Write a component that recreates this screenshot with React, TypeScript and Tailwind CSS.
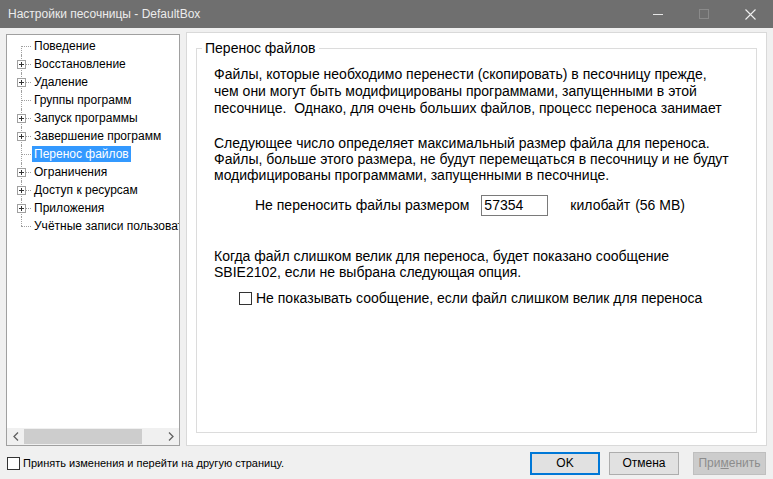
import React from "react";

const ITEMS = [
  { l: "Поведение", plus: false },
  { l: "Восстановление", plus: true },
  { l: "Удаление", plus: true },
  { l: "Группы программ", plus: false },
  { l: "Запуск программы", plus: true },
  { l: "Завершение программ", plus: true },
  { l: "Перенос файлов", plus: false, sel: true },
  { l: "Ограничения", plus: true },
  { l: "Доступ к ресурсам", plus: true },
  { l: "Приложения", plus: true },
  { l: "Учётные записи пользователей", plus: false },
];

function TreeRow({ i, l, plus, sel }: { i: number; l: string; plus: boolean; sel?: boolean }) {
  const first = i === 0;
  const last = i === ITEMS.length - 1;
  return (
    <div className="flex items-center h-[18px] whitespace-nowrap">
      <div className="relative w-[16px] h-[18px] shrink-0">
        {/* vertical connector */}
        <div
          className={`absolute left-[6px] border-l border-dotted border-[#a0a0a0] ${
            first ? "top-[9px] bottom-0" : last ? "top-0 h-[9px]" : "top-0 bottom-0"
          }`}
        />
        <div className="absolute left-[6px] top-[9px] w-[10px] border-t border-dotted border-[#a0a0a0]" />
        {plus && (
          <div className="absolute left-[2px] top-[5px] w-[9px] h-[9px] bg-white border border-[#a0a0a0] flex items-center justify-center">
            <svg width="5" height="5" viewBox="0 0 5 5">
              <path d="M0 2.5H5M2.5 0V5" stroke="#333" strokeWidth="1" />
            </svg>
          </div>
        )}
      </div>
      <span className={`ml-[1px] px-[2px] leading-[16px] ${sel ? "bg-[#3399ff] text-white" : "text-black"}`}>{l}</span>
    </div>
  );
}

export default function App() {
  return (
    <div
      className="w-[773px] h-[479px] bg-[#f0f0f0] flex flex-col overflow-hidden text-[12px] text-black"
      style={{ fontFamily: '"Liberation Sans", Arial, sans-serif' }}
    >
      {/* Title bar */}
      <div className="h-[28px] bg-[#6f6f6f] flex items-center shrink-0">
        <span className="ml-[8px] text-[12px] text-[#ececec]">Настройки песочницы - DefaultBox</span>
        <div className="ml-auto flex h-full">
          <div className="w-[46px] flex items-center justify-center">
            <div className="w-[10px] border-t border-[#e6e6e6]" />
          </div>
          <div className="w-[46px] flex items-center justify-center">
            <div className="w-[10px] h-[10px] border border-[#8a8a8a]" />
          </div>
          <div className="w-[46px] flex items-center justify-center">
            <svg width="11" height="11" viewBox="0 0 11 11">
              <path d="M0.5 0.5L10.5 10.5M10.5 0.5L0.5 10.5" stroke="#f0f0f0" strokeWidth="1.1" />
            </svg>
          </div>
        </div>
      </div>

      {/* Main area */}
      <div className="flex flex-1 px-[6px] pt-[4px] gap-[6px] min-h-0">
        {/* Tree */}
        <div className="w-[174px] mt-[2px] h-[412px] bg-white border border-[#a0a0a0] flex flex-col shrink-0">
          <div className="flex-1 pt-[2px] pl-[8px] overflow-hidden">
            {ITEMS.map((it, i) => (
              <TreeRow key={it.l} i={i} {...it} />
            ))}
          </div>
          <div className="h-[17px] bg-[#f0f0f0] flex items-center shrink-0">
            <div className="w-[17px] flex items-center justify-center">
              <svg width="6" height="9" viewBox="0 0 6 9">
                <path d="M5 0.5L1 4.5L5 8.5" stroke="#606060" strokeWidth="1.3" fill="none" />
              </svg>
            </div>
            <div className="w-[118px] h-[15px] bg-[#cdcdcd]" />
            <div className="ml-auto w-[17px] flex items-center justify-center">
              <svg width="6" height="9" viewBox="0 0 6 9">
                <path d="M1 0.5L5 4.5L1 8.5" stroke="#606060" strokeWidth="1.3" fill="none" />
              </svg>
            </div>
          </div>
        </div>

        {/* Right panel */}
        <div className="flex-1 h-[414px] bg-white border border-[#d9d9d9] px-[9px] pt-[15px] pb-[12px] flex flex-col text-[14px]">
          <div className="flex-1 border border-[#dcdcdc] relative pl-[17px] pt-[17px]">
            <span className="absolute left-[5px] -top-[9px] bg-white px-[3px] leading-[16px]">Перенос файлов</span>
            <div className="leading-[17px]">
              <p>Файлы, которые необходимо перенести (скопировать) в песочницу прежде,</p>
              <p>чем они могут быть модифицированы программами, запущенными в этой</p>
              <p>песочнице.&nbsp; Однако, для очень больших файлов, процесс переноса занимает</p>
            </div>
            <div className="leading-[16px] mt-[18px]">
              <p>Следующее число определяет максимальный размер файла для переноса.</p>
              <p>Файлы, больше этого размера, не будут перемещаться в песочницу и не будут</p>
              <p>модифицированы программами, запущенными в песочнице.</p>
            </div>
            <div className="flex items-center mt-[12px] ml-[41px]">
              <span>Не переносить файлы размером</span>
              <div className="ml-[12px] w-[67px] h-[21px] border border-[#7a7a7a] bg-white pl-[2px] leading-[19px]">57354</div>
              <span className="ml-[22px]">килобайт</span>
              <span className="ml-[5px]">(56 MB)</span>
            </div>
            <div className="leading-[16px] mt-[32px]">
              <p>Когда файл слишком велик для переноса, будет показано сообщение</p>
              <p>SBIE2102, если не выбрана следующая опция.</p>
            </div>
            <div className="flex items-center mt-[8px] ml-[25px]">
              <div className="w-[13px] h-[13px] border border-[#333] bg-white" />
              <span className="ml-[4px]">Не показывать сообщение, если файл слишком велик для переноса</span>
            </div>
          </div>
        </div>
      </div>

      {/* Bottom bar */}
      <div className="h-[32px] flex items-center shrink-0 px-[7px]">
        <div className="w-[13px] h-[13px] border border-[#333] bg-white" />
        <span className="ml-[3px] text-[11px]">Принять изменения и перейти на другую страницу.</span>
        <div className="ml-auto flex gap-[9px] text-[12px]">
          <button className="w-[70px] h-[23px] bg-[#e1e1e1] border-2 border-[#0078d7] leading-[19px]">OK</button>
          <button className="w-[70px] h-[23px] bg-[#e1e1e1] border border-[#adadad] leading-[21px]">Отмена</button>
          <button className="ml-[5px] w-[73px] h-[23px] bg-[#cccccc] border border-[#bfbfbf] text-[#8c8c8c] leading-[21px]">
            При<span className="underline">м</span>енить
          </button>
        </div>
      </div>
    </div>
  );
}
